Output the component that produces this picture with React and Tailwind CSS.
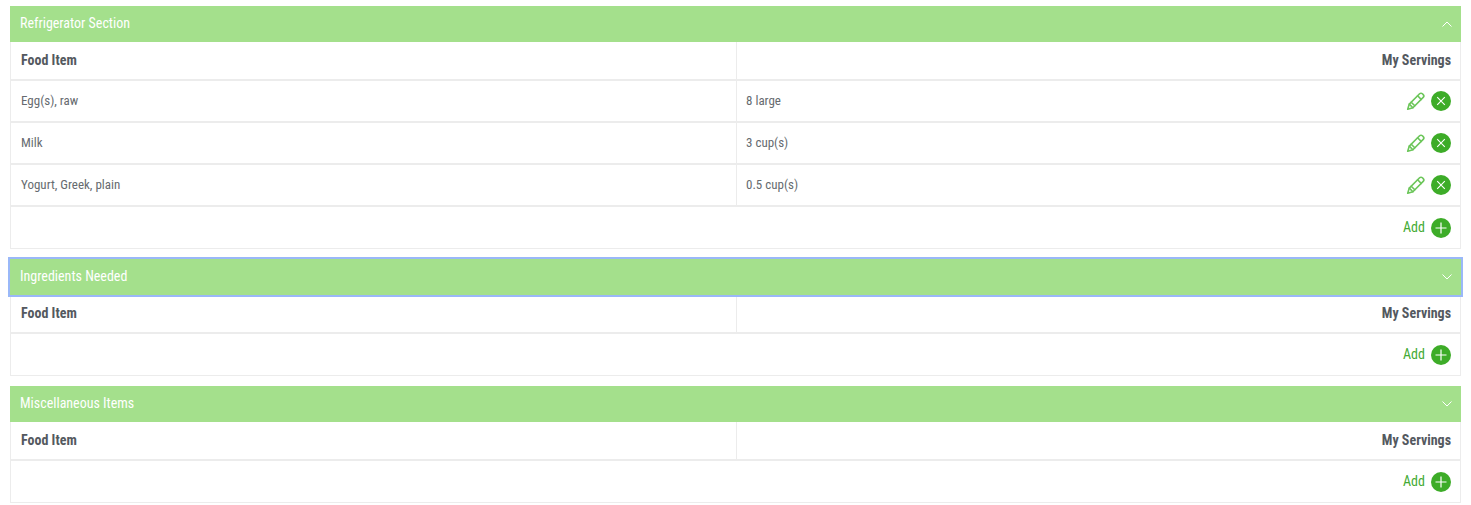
const font = { fontFamily: '"Roboto Condensed", Roboto, sans-serif', fontStretch: '75%' }

const Pencil = () => (
  <svg width="20" height="20" viewBox="0 0 20 20" fill="none" stroke="#6cc65a" strokeWidth="1.6" strokeLinejoin="round" strokeLinecap="round">
    <path d="M1.7 18.3l1.6-5.2L13.6 2.8c.8-.8 2-.8 2.8 0l.8.8c.8.8.8 2 0 2.8L6.9 16.7z" />
    <path d="M3.3 13.1l3.6 3.6M11.6 4.8l3.6 3.6M5.2 11.2l3.6 3.6" />
  </svg>
)

const RoundBtn = ({ type }) => (
  <span className="flex h-5 w-5 items-center justify-center rounded-full bg-[#3dac28]">
    <svg width="20" height="20" viewBox="0 0 20 20" stroke="#fff" fill="none">
      {type === 'x' ? (
        <path d="M6.2 6.2l7.6 7.6M13.8 6.2l-7.6 7.6" strokeWidth="1.1" />
      ) : (
        <path d="M10 4.5v11M4.5 10h11" strokeWidth="1.2" />
      )}
    </svg>
  </span>
)

const Chevron = ({ up }) => (
  <svg width="10" height="6" viewBox="0 0 10 6" fill="none" stroke="#fff" strokeWidth="1">
    <path d={up ? 'M.5 5.5L5 1l4.5 4.5' : 'M.5.5L5 5 9.5.5'} />
  </svg>
)

const Section = ({ title, open, focused, rows }) => (
  <section className="mx-[10px] mb-[10px]">
    <div className={`flex h-9 items-center justify-between bg-[#a4e08c] pl-[10px] pr-[9px] text-[14px] text-white ${focused ? 'outline-2 outline-[#9ab8f8]' : ''}`}>
      <span className="pb-px">{title}</span>
      <Chevron up={open} />
    </div>
    <div className="border-x border-b border-[#ececec] bg-white">
      <div className="grid h-[39px] grid-cols-[726px_1fr] border-b-2 border-[#ececec] text-[14px] font-bold text-[#54595f]">
        <div className="flex items-center border-r border-[#ececec] pl-[10px]">Food Item</div>
        <div className="flex items-center justify-end pr-[9px]">My Servings</div>
      </div>
      {rows.map((row) => (
        <div key={row[0]} className="grid h-[42px] grid-cols-[726px_1fr] border-b-2 border-[#ececec] text-[13px] text-[#666b70]">
          <div className="flex items-center border-r border-[#ececec] pl-[10px]">{row[0]}</div>
          <div className="flex items-center justify-between pl-[9px] pr-[9px]">
            <span>{row[1]}</span>
            <span className="flex items-center gap-[5px]">
              <Pencil />
              <RoundBtn type="x" />
            </span>
          </div>
        </div>
      ))}
      <div className="flex h-[41px] items-center justify-end gap-[6px] pr-[9px] text-[14px] text-[#44ab34]">
        <span>Add</span>
        <RoundBtn type="plus" />
      </div>
    </div>
  </section>
)

export default function App() {
  return (
    <div className="min-h-screen bg-white pt-[6px]" style={font}>
      <Section
        title="Refrigerator Section"
        open
        rows={[
          ['Egg(s), raw', '8 large'],
          ['Milk', '3 cup(s)'],
          ['Yogurt, Greek, plain', '0.5 cup(s)'],
        ]}
      />
      <Section title="Ingredients Needed" focused rows={[]} />
      <Section title="Miscellaneous Items" rows={[]} />
    </div>
  )
}
